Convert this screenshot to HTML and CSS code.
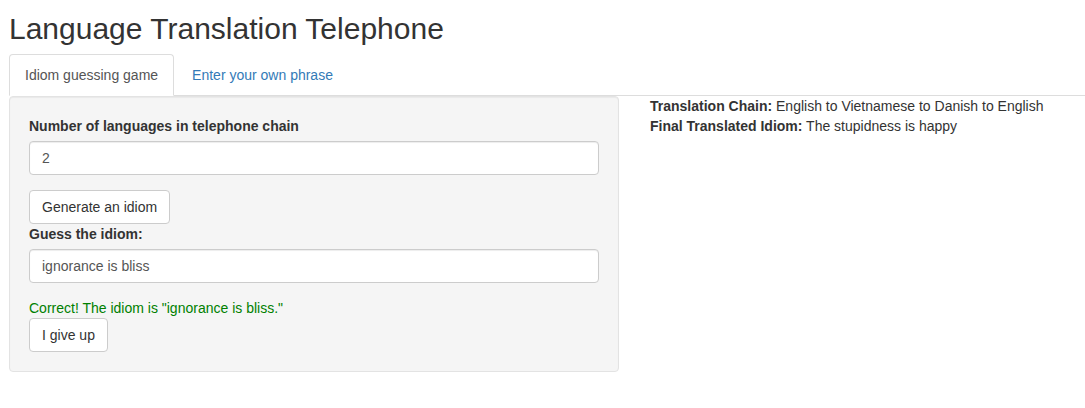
FILE: index.html
```html
<!DOCTYPE html>
<html>
<head>
<meta charset="utf-8">
<title>Language Translation Telephone</title>
<link rel="stylesheet" href="styles.css">
</head>
<body>
<div class="page">
  <h2 class="title">Language Translation Telephone</h2>
  <ul class="tabs">
    <li class="tab active"><a>Idiom guessing game</a></li>
    <li class="tab"><a>Enter your own phrase</a></li>
  </ul>
  <div class="content">
    <div class="sidebar">
      <div class="well">
        <div class="form-group">
          <label class="label">Number of languages in telephone chain</label>
          <div class="input">2</div>
        </div>
        <button class="btn">Generate an idiom</button>
        <div class="form-group">
          <label class="label">Guess the idiom:</label>
          <div class="input">ignorance is bliss</div>
        </div>
        <div class="success">Correct! The idiom is "ignorance is bliss."</div>
        <button class="btn">I give up</button>
      </div>
    </div>
    <div class="main">
      <div><b>Translation Chain:</b> English to Vietnamese to Danish to English</div>
      <div><b>Final Translated Idiom:</b> The stupidness is happy</div>
    </div>
  </div>
</div>
</body>
</html>
```

FILE: styles.css
```css
* { box-sizing: border-box; }
html, body {
  margin: 0;
  background: #fff;
}
body {
  font-family: "Liberation Sans", Arial, Helvetica, sans-serif;
  font-size: 14px;
  line-height: 20px;
  color: #333;
}
.page {
  padding-left: 9px;
}
.title {
  margin: 12px 0 9px 0;
  font-size: 30px;
  font-weight: 500;
  line-height: 33px;
}
.tabs {
  list-style: none;
  margin: 0;
  padding: 0;
  display: flex;
  border-bottom: 1px solid #ddd;
}
.tab {
  margin-right: 2px;
  margin-bottom: -1px;
}
.tab a {
  display: block;
  padding: 10px 15px;
  line-height: 20px;
  border: 1px solid transparent;
  border-radius: 4px 4px 0 0;
  color: #337ab7;
}
.tab.active a {
  color: #555;
  background: #fff;
  border-color: #ddd #ddd transparent #ddd;
}
.content {
  display: flex;
  gap: 31px;
}
.sidebar {
  width: 610px;
  flex: none;
}
.well {
  background: #f5f5f5;
  border: 1px solid #e3e3e3;
  border-radius: 4px;
  padding: 19px;
  box-shadow: inset 0 1px 1px rgba(0,0,0,.05);
}
.form-group {
  margin-bottom: 15px;
}
.label {
  display: block;
  font-weight: 700;
  margin-bottom: 5px;
}
.input {
  height: 34px;
  padding: 6px 12px;
  line-height: 20px;
  color: #555;
  background: #fff;
  border: 1px solid #ccc;
  border-radius: 4px;
  box-shadow: inset 0 1px 1px rgba(0,0,0,.075);
}
.btn {
  display: block;
  font-family: inherit;
  font-size: 14px;
  line-height: 20px;
  padding: 6px 12px;
  color: #333;
  background: #fff;
  border: 1px solid #ccc;
  border-radius: 4px;
}
.success {
  color: green;
}
.main {
  flex: 1;
}
```
